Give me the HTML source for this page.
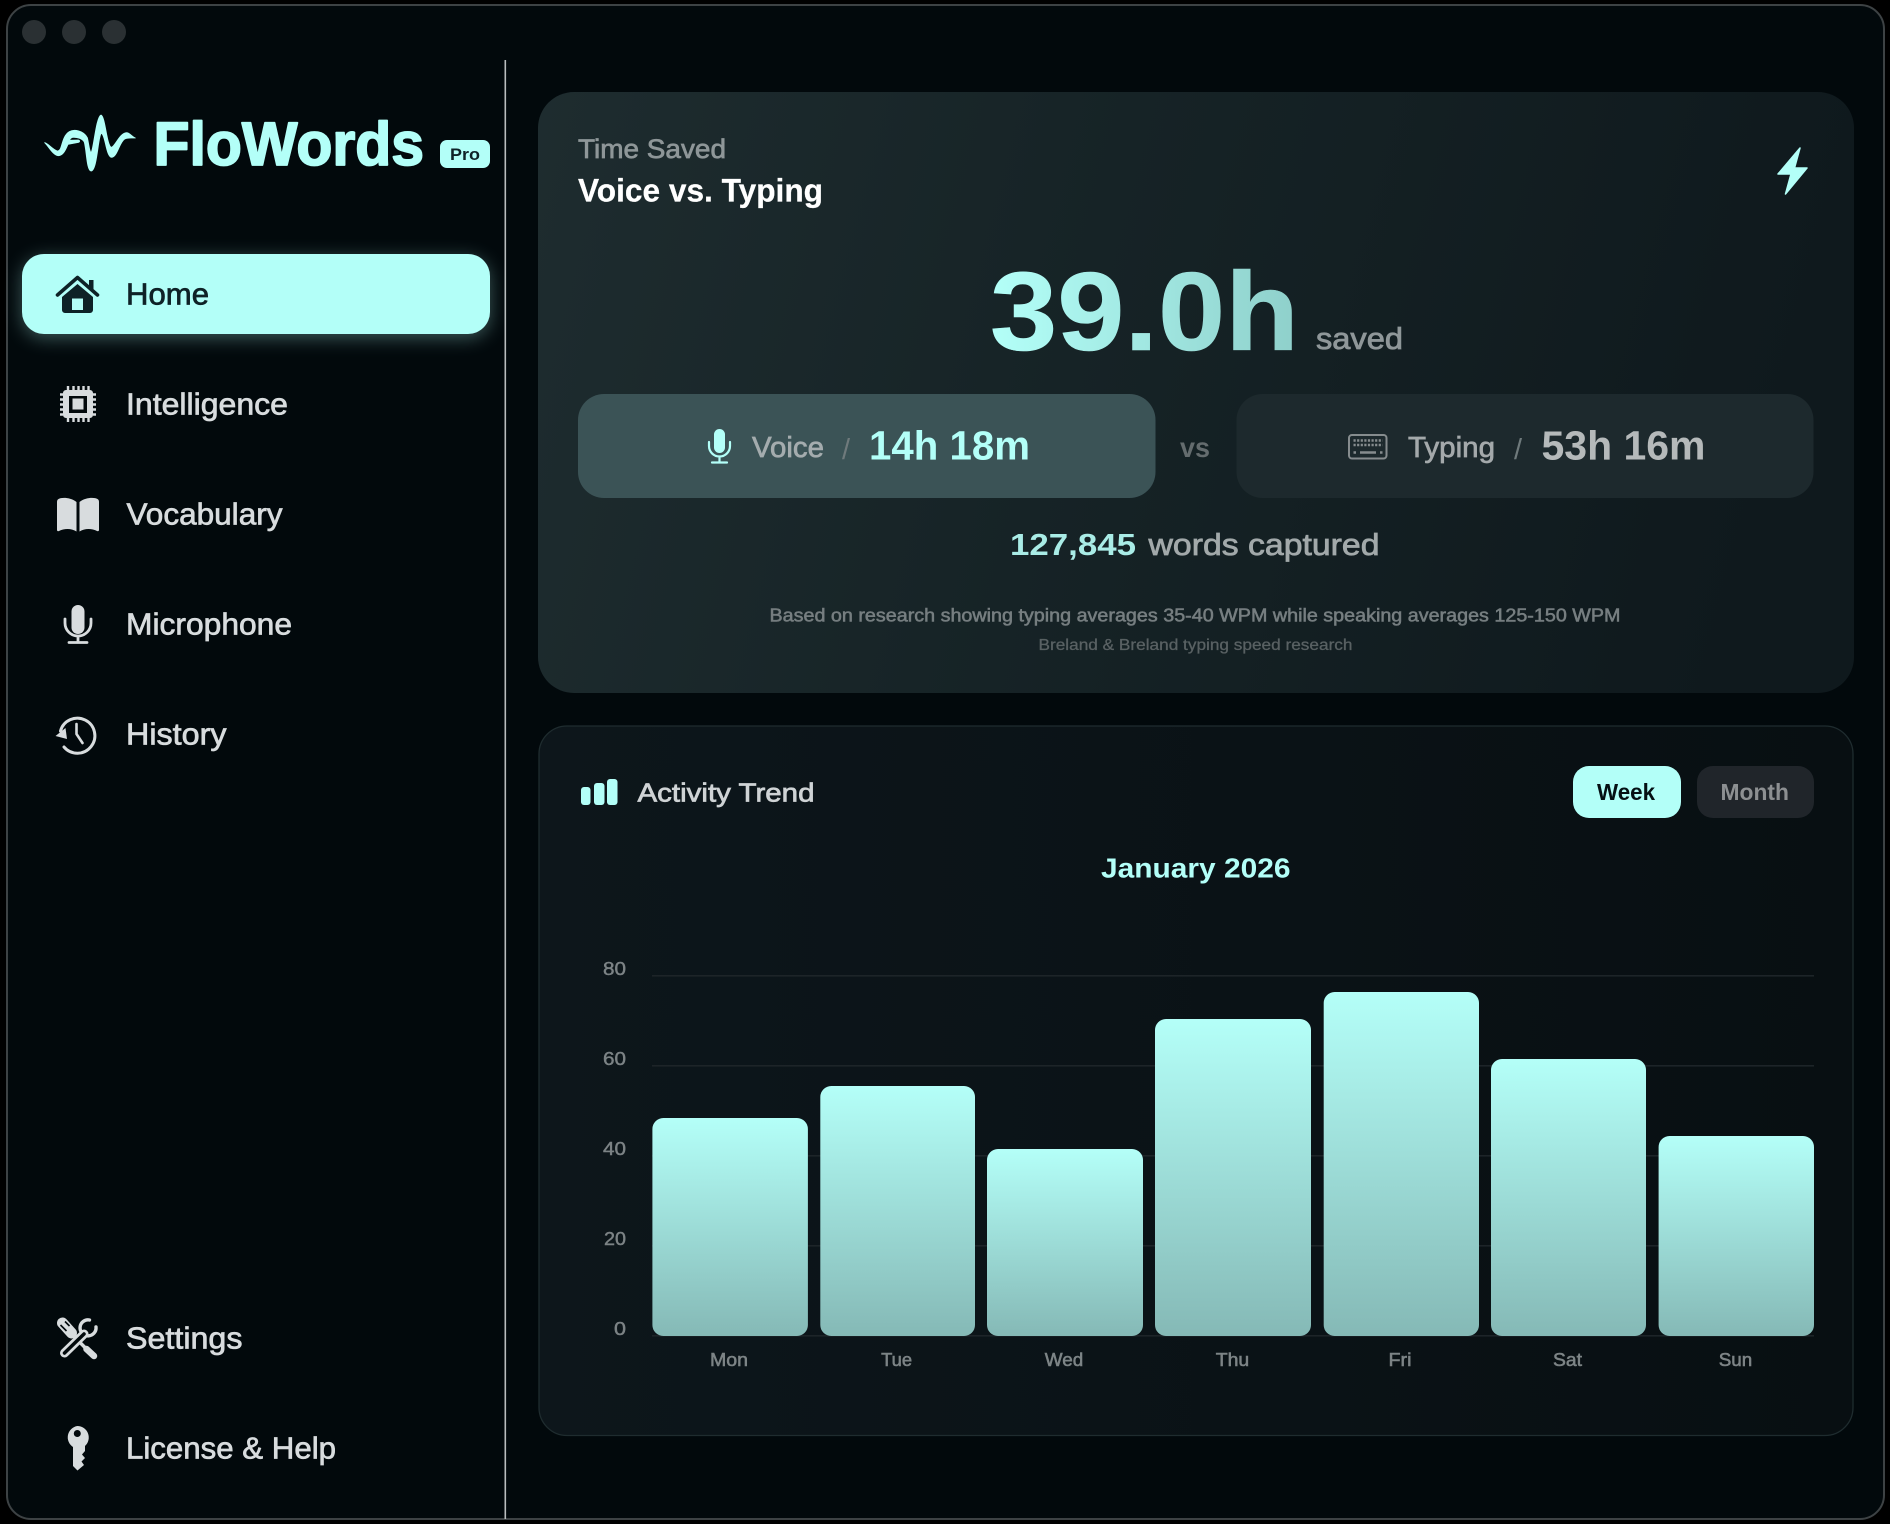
<!DOCTYPE html>
<html lang="en">
<head>
<meta charset="utf-8">
<title>FloWords</title>
<style>
html,body{margin:0;padding:0;background:#000;width:1890px;height:1524px;overflow:hidden}
svg{display:block}
text{font-family:"Liberation Sans",sans-serif}
.nav{font-size:30.5px;fill:#d8dcde;stroke:#d8dcde;stroke-width:.7px}
.yl{font-size:18.5px;fill:#7c8385;stroke:#7c8385;stroke-width:.45px;text-anchor:end}
.xl{font-size:18px;fill:#7d8486;stroke:#7d8486;stroke-width:.55px;text-anchor:middle}
.ic{fill:#d8dcde}
</style>
</head>
<body>
<svg width="1890" height="1524" viewBox="0 0 1890 1524" xmlns="http://www.w3.org/2000/svg">
<defs>
<linearGradient id="card1" x1="0" y1="0" x2="1" y2="0.12">
<stop offset="0" stop-color="#1e2c2f"/><stop offset=".45" stop-color="#162326"/><stop offset="1" stop-color="#0f191d"/>
</linearGradient>
<linearGradient id="card2" x1="0" y1="0" x2="1" y2="0">
<stop offset="0" stop-color="#0d161b"/><stop offset="1" stop-color="#080f12"/>
</linearGradient>
<linearGradient id="bar" x1="0" y1="0" x2="0" y2="1">
<stop offset="0" stop-color="#b4fff8"/><stop offset="1" stop-color="#85b9b6"/>
</linearGradient>
<linearGradient id="big" gradientUnits="userSpaceOnUse" x1="993" y1="0" x2="1295" y2="0">
<stop offset="0" stop-color="#b3fff8"/><stop offset="1" stop-color="#8fd0cb"/>
</linearGradient>
<filter id="glow" x="-10%" y="-50%" width="120%" height="200%"><feGaussianBlur stdDeviation="9"/></filter>
</defs>

<rect width="1890" height="1524" fill="#000"/>
<rect x="7" y="5" width="1877" height="1514" rx="24" fill="#02090c" stroke="#3d4244" stroke-width="2"/>

<circle cx="34" cy="32" r="12" fill="#2a3033"/>
<circle cx="74" cy="32" r="12" fill="#2a3033"/>
<circle cx="114" cy="32" r="12" fill="#2a3033"/>

<rect x="504.5" y="60" width="1.6" height="1459" fill="#b9bdbe"/>

<!-- logo -->
<g transform="translate(30,105) scale(.33333)">
<path fill="#b3fff8" stroke="#b3fff8" stroke-width="2.500" stroke-linejoin="round" d="M44 113C56 116 66 132 82 138C98 140 92 96 118 80C132 72 160 76 172 98C176 112 178 140 183 142C190 140 198 34 213 30C226 34 230 122 244 127C256 124 268 84 290 83C300 84 306 95 316 99C302 99 296 97 284 102C268 112 262 156 245 157C228 156 226 88 214 85C204 92 202 198 183 198C170 196 170 140 163 112C158 100 140 96 128 97C124 98 120 102 118 106L145 105C150 106 150 111 146 112L114 118C108 132 100 152 85 152C68 150 56 124 44 113Z"/>
</g>
<text x="153.500" y="165" font-size="61" font-weight="700" fill="#b3fff8" stroke="#b3fff8" stroke-width="1.800" stroke-linejoin="round" textLength="270.500" lengthAdjust="spacingAndGlyphs">FloWords</text>
<rect x="440" y="140" width="50" height="28" rx="7" fill="#b3fff8"/>
<text x="450" y="160" font-size="17" font-weight="700" fill="#0e2227" textLength="30" lengthAdjust="spacingAndGlyphs">Pro</text>

<!-- Home -->
<rect x="22" y="258" width="468" height="80" rx="22" fill="#b3fff8" opacity=".32" filter="url(#glow)"/>
<rect x="22" y="254" width="468" height="80" rx="22" fill="#b3fff8"/>
<g fill="#0e2227">
<path d="M57.5 295L77.500 277.5L97.5 295" fill="none" stroke="#0e2227" stroke-width="3.6" stroke-linecap="round" stroke-linejoin="round"/>
<rect x="89" y="280" width="4.5" height="9"/>
<path fill-rule="evenodd" d="M62 297L77.5 284L93 297V310a3 3 0 0 1-3 3H65a3 3 0 0 1-3-3ZM72 298.500V310H83V298.500Z"/>
</g>
<text x="126" y="304.500" font-size="30.500" fill="#0e2227" stroke="#0e2227" stroke-width=".7" textLength="83" lengthAdjust="spacingAndGlyphs">Home</text>

<!-- Intelligence -->
<g class="ic">
<path fill-rule="evenodd" d="M66 390H90a3 3 0 0 1 3 3V415a3 3 0 0 1-3 3H66a3 3 0 0 1-3-3V393a3 3 0 0 1 3-3ZM69 396V413H87V396Z"/>
<rect x="72.500" y="398.500" width="11" height="11"/>
<g stroke="#d8dcde" stroke-width="2.400">
<path d="M68 386V390M73.500 386V390M78.500 386V390M83.500 386V390M88.500 386V390M68 418V422M73.500 418V422M78.500 418V422M83.500 418V422M88.500 418V422"/>
<path d="M60 394.500H63M60 399.500H63M60 404.500H63M60 409.500H63M60 414.500H63M93 394.500H96M93 399.500H96M93 404.500H96M93 409.500H96M93 414.500H96"/>
</g>
</g>
<text class="nav" x="126" y="414.500" textLength="162" lengthAdjust="spacingAndGlyphs">Intelligence</text>

<!-- Vocabulary -->
<g class="ic">
<path d="M76.500 502C71 497.500 62 497 58.500 499C57.500 499.500 57 500.500 57 502V530C57 531 58 531.500 59 531C64 528.500 71 528 76.500 531.500Z"/>
<path d="M79.500 502C85 497.500 94 497 97.500 499C98.500 499.500 99 500.500 99 502V530C99 531 98 531.500 97 531C92 528.500 85 528 79.500 531.500Z"/>
</g>
<text class="nav" x="126.500" y="524.500" textLength="156" lengthAdjust="spacingAndGlyphs">Vocabulary</text>

<!-- Microphone -->
<rect class="ic" x="71.500" y="605" width="13" height="29" rx="6.500"/>
<path d="M65 619V623a13 13 0 0 0 26 0V619M78 636V642M69 642.500H87" fill="none" stroke="#d8dcde" stroke-width="2.800" stroke-linecap="round"/>
<text class="nav" x="126" y="634.500" textLength="166" lengthAdjust="spacingAndGlyphs">Microphone</text>

<!-- History -->
<g transform="translate(-1,0)">
<path d="M61.500 731A17.500 17.500 0 1 1 65 747" fill="none" stroke="#d8dcde" stroke-width="3" stroke-linecap="round"/>
<path class="ic" d="M56.500 736L66.500 728L68 739Z"/>
<path d="M77.500 724V734L83.500 743" fill="none" stroke="#d8dcde" stroke-width="2.600" stroke-linecap="round" stroke-linejoin="round"/>
</g>
<text class="nav" x="126" y="744.500" textLength="100.500" lengthAdjust="spacingAndGlyphs">History</text>

<!-- Settings -->
<g transform="translate(-.5,0)">
<g fill="none" stroke="#d8dcde" stroke-linecap="round">
<path d="M63 1323L72 1333" stroke-width="11"/>
<path d="M74 1336L87 1349" stroke-width="3.400"/>
<path d="M87 1349L94.500 1356" stroke-width="6.500"/>
<path d="M84.500 1334L65 1353" stroke-width="9"/>
<path d="M96.500 1327A8 8 0 1 1 90 1320" stroke-width="3.400"/>
</g>
<path d="M84.500 1334L65 1353" fill="none" stroke="#02090c" stroke-width="3.500" stroke-linecap="round"/>
<path d="M61 1325L67 1331M65.500 1321.500L70 1326" fill="none" stroke="#02090c" stroke-width="1.600"/>
</g>
<text class="nav" x="126" y="1348.500" textLength="116.500" lengthAdjust="spacingAndGlyphs">Settings</text>

<!-- Key -->
<path class="ic" fill-rule="evenodd" d="M77.300 1426A11.500 11.500 0 0 1 85 1446V1451L82 1454.500L85 1458L81.500 1461.500L84 1465L77.500 1470.500L73 1466V1447A11.500 11.500 0 0 1 77.300 1426ZM77.300 1430A3.500 3.500 0 1 0 77.300 1437A3.500 3.500 0 1 0 77.300 1430Z"/>
<text class="nav" x="126" y="1458.500" textLength="210" lengthAdjust="spacingAndGlyphs">License &amp; Help</text>

<!-- Time saved card -->
<rect x="538" y="92" width="1316" height="601" rx="36" fill="url(#card1)"/>
<text x="578" y="158" font-size="26.500" fill="#8e9698" stroke="#8e9698" stroke-width=".7" textLength="148" lengthAdjust="spacingAndGlyphs">Time Saved</text>
<text x="578" y="201.500" font-size="32" font-weight="700" fill="#fff" stroke="#fff" stroke-width=".25" textLength="245" lengthAdjust="spacingAndGlyphs">Voice vs. Typing</text>
<path d="M1800 148L1778 174H1791L1785.500 194L1807 168H1794.500Z" fill="#b3fff8" stroke="#b3fff8" stroke-width="1.500" stroke-linejoin="round"/>

<text x="990" y="350" font-size="111" font-weight="700" fill="url(#big)" stroke="url(#big)" stroke-width=".6" textLength="309" lengthAdjust="spacingAndGlyphs">39.0h</text>
<text x="1316" y="349" font-size="31" fill="#8f9799" stroke="#8f9799" stroke-width=".8" textLength="87" lengthAdjust="spacingAndGlyphs">saved</text>

<rect x="578" y="394" width="577.500" height="104" rx="26" fill="#3b5356"/>
<rect x="1236.500" y="394" width="577" height="104" rx="26" fill="#1d292d"/>

<rect x="714" y="429" width="11" height="24" rx="5.500" fill="#b3fff8"/>
<path d="M709 442V446a10.500 10.500 0 0 0 21 0V442M719.500 456.500V461.500M712 462.500H727" fill="none" stroke="#b3fff8" stroke-width="2.200" stroke-linecap="round"/>
<text x="752" y="457" font-size="29" fill="#a4acae" stroke="#a4acae" stroke-width=".7" textLength="72" lengthAdjust="spacingAndGlyphs">Voice</text>
<text x="842" y="459" font-size="29" fill="#6f7a7c">/</text>
<text x="869" y="459.500" font-size="41" font-weight="700" fill="#b3fff8" textLength="161" lengthAdjust="spacingAndGlyphs">14h 18m</text>

<text x="1180" y="457" font-size="28" font-weight="700" fill="#646c6e" textLength="30" lengthAdjust="spacingAndGlyphs">vs</text>

<rect x="1349" y="435" width="37.500" height="23.500" rx="3" fill="none" stroke="#868c8e" stroke-width="2"/>
<path d="M1353.500 440.500H1382.500M1353.500 445H1382.500" fill="none" stroke="#868c8e" stroke-width="2.400" stroke-dasharray="2.200 1.400"/>
<path d="M1353.500 452.500H1356M1360 452.500H1376M1380 452.500H1382.500" fill="none" stroke="#868c8e" stroke-width="2.400"/>
<text x="1408" y="457" font-size="29" fill="#a4a9ab" stroke="#a4a9ab" stroke-width=".7" textLength="87" lengthAdjust="spacingAndGlyphs">Typing</text>
<text x="1514" y="459" font-size="29" fill="#6f7a7c">/</text>
<text x="1541.500" y="459.500" font-size="41" font-weight="700" fill="#b5b9ba" textLength="164" lengthAdjust="spacingAndGlyphs">53h 16m</text>

<text x="1010" y="555" font-size="31" font-weight="700" fill="#a9ece6" textLength="126" lengthAdjust="spacingAndGlyphs">127,845</text>
<text x="1148.500" y="555" font-size="31" fill="#a2a9aa" stroke="#a2a9aa" stroke-width=".75" textLength="231" lengthAdjust="spacingAndGlyphs">words captured</text>

<text x="769.500" y="621.500" font-size="18" fill="#767e80" stroke="#767e80" stroke-width=".55" textLength="851" lengthAdjust="spacingAndGlyphs">Based on research showing typing averages 35-40 WPM while speaking averages 125-150 WPM</text>
<text x="1038.500" y="650" font-size="16" fill="#596163" stroke="#596163" stroke-width=".3" textLength="314" lengthAdjust="spacingAndGlyphs">Breland &amp; Breland typing speed research</text>

<!-- Activity card -->
<rect x="539" y="726" width="1314" height="709.500" rx="28" fill="url(#card2)" stroke="#1f2c2f" stroke-width="1.300"/>
<rect x="581" y="787" width="9.500" height="18" rx="3" fill="#b3fff8"/>
<rect x="594" y="783" width="10.500" height="22" rx="3" fill="#b3fff8"/>
<rect x="607" y="779" width="10.500" height="26" rx="3" fill="#b3fff8"/>
<text x="637.500" y="801.500" font-size="26" fill="#cfd3d5" stroke="#cfd3d5" stroke-width=".7" textLength="177" lengthAdjust="spacingAndGlyphs">Activity Trend</text>

<rect x="1573" y="766" width="108" height="52" rx="16" fill="#b3fff8"/>
<text x="1597" y="800" font-size="23" font-weight="700" fill="#051014" textLength="58" lengthAdjust="spacingAndGlyphs">Week</text>
<rect x="1697" y="766" width="117" height="52" rx="16" fill="#20252a"/>
<text x="1720.500" y="800" font-size="23" font-weight="700" fill="#8d9092" textLength="68.500" lengthAdjust="spacingAndGlyphs">Month</text>

<text x="1101" y="877.500" font-size="28" font-weight="700" fill="#b3fff8" textLength="189.500" lengthAdjust="spacingAndGlyphs">January 2026</text>

<g fill="#1d2428">
<rect x="652" y="975" width="1162" height="1.600"/>
<rect x="652" y="1065" width="1162" height="1.600"/>
<rect x="652" y="1155" width="1162" height="1.600"/>
<rect x="652" y="1245" width="1162" height="1.600"/>
<rect x="652" y="1335" width="1162" height="1.600"/>
</g>
<text class="yl" x="626" y="975" textLength="23" lengthAdjust="spacingAndGlyphs">80</text>
<text class="yl" x="626" y="1065" textLength="23" lengthAdjust="spacingAndGlyphs">60</text>
<text class="yl" x="626" y="1155" textLength="23" lengthAdjust="spacingAndGlyphs">40</text>
<text class="yl" x="626" y="1245" textLength="22" lengthAdjust="spacingAndGlyphs">20</text>
<text class="yl" x="626" y="1335" textLength="12" lengthAdjust="spacingAndGlyphs">0</text>

<g fill="url(#bar)">
<rect x="652.400" y="1118" width="155.500" height="218" rx="11"/>
<rect x="820.300" y="1086" width="154.700" height="250" rx="11"/>
<rect x="987" y="1149" width="156" height="187" rx="11"/>
<rect x="1155" y="1019" width="156" height="317" rx="11"/>
<rect x="1323.700" y="992" width="155.300" height="344" rx="11"/>
<rect x="1491" y="1059" width="155" height="277" rx="11"/>
<rect x="1658.600" y="1136" width="155.400" height="200" rx="11"/>
</g>

<text class="xl" x="729" y="1366" textLength="38" lengthAdjust="spacingAndGlyphs">Mon</text>
<text class="xl" x="896.600" y="1366" textLength="31" lengthAdjust="spacingAndGlyphs">Tue</text>
<text class="xl" x="1064" y="1366" textLength="38.500" lengthAdjust="spacingAndGlyphs">Wed</text>
<text class="xl" x="1232.500" y="1366" textLength="33.500" lengthAdjust="spacingAndGlyphs">Thu</text>
<text class="xl" x="1400" y="1366" textLength="23" lengthAdjust="spacingAndGlyphs">Fri</text>
<text class="xl" x="1567.500" y="1366" textLength="29" lengthAdjust="spacingAndGlyphs">Sat</text>
<text class="xl" x="1735.500" y="1366" textLength="33.500" lengthAdjust="spacingAndGlyphs">Sun</text>
</svg>
</body>
</html>
